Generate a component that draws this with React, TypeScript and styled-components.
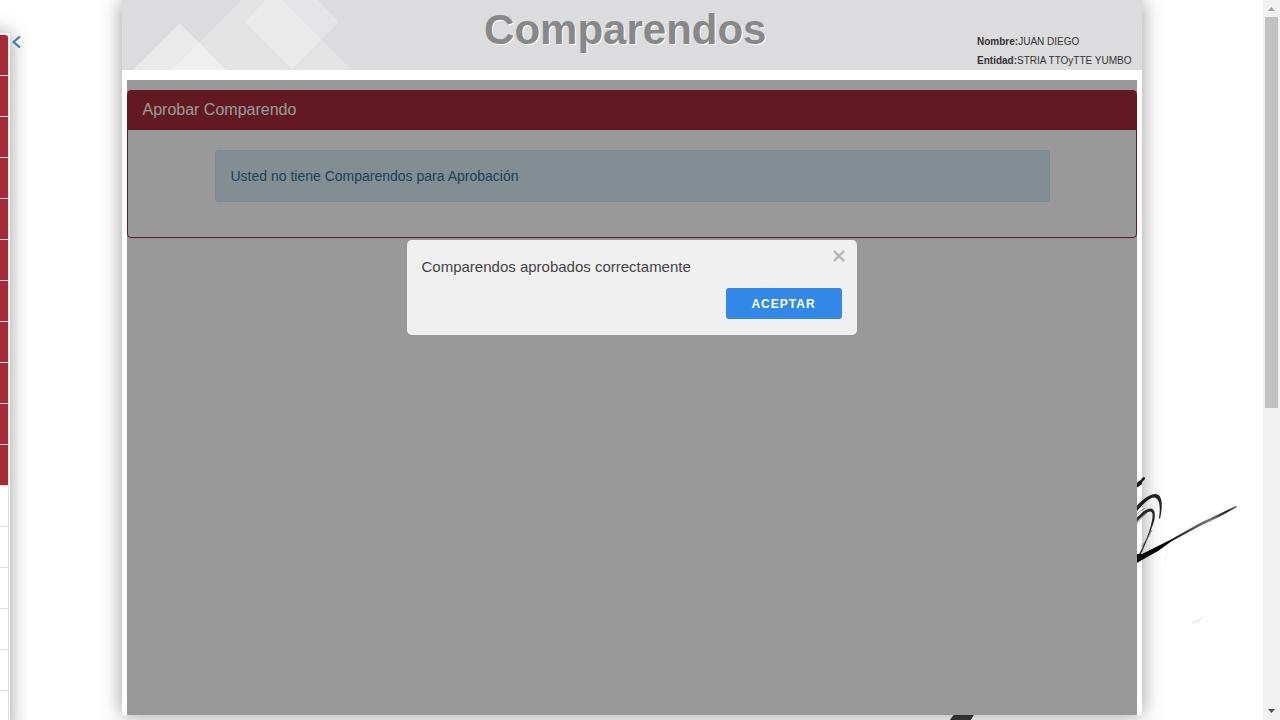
import React, { useState } from "react";
import styled, { createGlobalStyle } from "styled-components";

const GlobalStyle = createGlobalStyle`
  *, *::before, *::after { box-sizing: border-box; }
  body {
    margin: 0;
    background: #fff;
    color: #333;
    font-family: "Liberation Sans", Arial, sans-serif;
    font-size: 14px;
    line-height: 20px;
  }
`;

const Page = styled.div`
  display: grid;
  grid-template-columns: minmax(0, 1fr) 17px;
  height: 100vh;
  overflow: hidden;
`;

const Content = styled.div`
  position: relative;
  display: flex;
  justify-content: center;
  padding-bottom: 5px;
  overflow: hidden;
`;

const Signature = styled.svg`
  position: absolute;
  right: 0;
  bottom: 0;
  width: 330px;
  height: 260px;
`;

const SideMenu = styled.nav`
  position: absolute;
  left: -240px;
  top: 33px;
  width: 250px;
  padding: 1px;
  border-radius: 4px;
  background: #fff;
  box-shadow: 0 0 20px rgba(0, 0, 0, 0.4);
`;

const MenuList = styled.ul`
  margin: 0;
  padding: 0;
  list-style: none;
  border: 1px solid #ddd;
  border-radius: 4px;
  overflow: hidden;
`;

const MenuItem = styled.li<{ $active: boolean }>`
  height: 41px;
  border-bottom: 1px solid #ddd;
  background: ${(p) => (p.$active ? "#a42a37" : "#fff")};
`;

const MenuToggle = styled.button`
  position: absolute;
  left: 12px;
  top: 36px;
  display: flex;
  padding: 0;
  border: 0;
  background: none;
  color: #337ab7;
  cursor: pointer;
`;

const Shell = styled.div`
  position: relative;
  display: flex;
  flex-direction: column;
  width: 100%;
  max-width: 1020px;
  box-shadow: 0 0 20px rgba(0, 0, 0, 0.4);
`;

const Header = styled.header`
  display: flex;
  height: 70px;
  background: #dcdcde;
`;

const HeaderArt = styled.svg`
  flex: none;
  width: 232px;
  height: 70px;
`;

const Title = styled.h1`
  flex: 1;
  margin: 0;
  text-align: center;
  font-size: 42px;
  line-height: 60px;
  color: #888;
  text-shadow: 1px 1px 0 #fff;
`;

const UserInfo = styled.dl`
  display: flex;
  flex-direction: column;
  justify-content: flex-end;
  margin: 0;
  padding: 0 10px 0 80px;
  font-size: 10px;
  line-height: 19px;
`;

const UserRow = styled.div`
  display: flex;
  dt { font-weight: bold; }
  dd { margin: 0; white-space: nowrap; }
`;

const Frame = styled.main`
  position: relative;
  flex: 1;
  margin: 10px 5px 0;
  padding-top: 10px;
  background: #fff;
`;

const Panel = styled.section`
  border: 1px solid #a42a37;
  border-radius: 4px;
  background: #fff;
  box-shadow: 0 1px 1px rgba(0, 0, 0, 0.05);
`;

const PanelTitle = styled.h2`
  margin: 0;
  padding: 9px 15px 11px;
  background: #a42a37;
  color: #fff;
  font-size: 16px;
  font-weight: normal;
  line-height: 19px;
`;

const PanelBody = styled.div`
  padding: 20px 86px 35px 87px;
`;

const Alert = styled.div`
  padding: 15px;
  border: 1px solid #bce8f1;
  border-radius: 4px;
  background: #d9edf7;
  color: #31708f;
`;

const Overlay = styled.div`
  position: absolute;
  inset: 0;
  display: flex;
  justify-content: center;
  align-items: flex-start;
  padding-top: 160px;
  background: rgba(0, 0, 0, 0.4);
`;

const Dialog = styled.div`
  position: relative;
  display: flex;
  flex-direction: column;
  width: 450px;
  padding: 15px 15px 16px;
  border-radius: 5px;
  background: #f0f0f0;
  color: #444;
  font-size: 15px;
  line-height: 23px;
`;

const DialogText = styled.p`
  margin: 0 0 10px;
`;

const AcceptButton = styled.button`
  align-self: flex-end;
  min-width: 116px;
  height: 31px;
  padding: 0 24px;
  border: 0;
  border-radius: 3px;
  background: #3288e6;
  color: #fff;
  font-family: inherit;
  font-size: 12px;
  font-weight: bold;
  letter-spacing: 1px;
  text-transform: uppercase;
  cursor: pointer;
`;

const CloseButton = styled.button`
  position: absolute;
  top: 10px;
  right: 12px;
  display: flex;
  padding: 0;
  border: 0;
  background: none;
  color: #bbb;
  cursor: pointer;
`;

const ScrollTrack = styled.div`
  display: flex;
  flex-direction: column;
  align-items: center;
  background: #f1f1f1;
`;

const ScrollArrow = styled.svg`
  flex: none;
  width: 17px;
  height: 17px;
`;

const ScrollRail = styled.div`
  flex: 1;
  width: 13px;
`;

const ScrollThumb = styled.div`
  height: 57%;
  background: #c1c1c1;
`;

const menuItems = Array.from({ length: 17 }, (_, i) => ({ id: i, active: i < 11 }));

const user = [
  { label: "Nombre:", value: "JUAN DIEGO" },
  { label: "Entidad:", value: "STRIA TTOyTTE YUMBO" },
];

export default function App() {
  const [open, setOpen] = useState(true);
  return (
    <>
      <GlobalStyle />
      <Page>
        <Content>
          <Signature viewBox="933 460 330 260" aria-hidden="true">
            <defs>
              <linearGradient id="ink" x1="0" x2="1">
                <stop offset="0" stopColor="#111" />
                <stop offset="0.35" stopColor="#000" />
                <stop offset="0.6" stopColor="#555" />
                <stop offset="0.75" stopColor="#777" />
                <stop offset="0.9" stopColor="#222" />
                <stop offset="1" stopColor="#555" />
              </linearGradient>
            </defs>
            <path d="M1132 486L1137 483L1139 481L1141 480L1142 478L1144.500 477L1145 479L1142 482L1142 484L1138 487L1132 490z" fill="#1a1a1a" />
            <path
              d="M1130 515C1137 504 1147 494 1156 494C1162.500 495 1163 505 1160 519L1159 518C1161 505 1159 498 1154 497.500C1148 498 1141 506 1130 520z"
              fill="#242224"
            />
            <path
              d="M1130 526C1137 517 1144 508.500 1151 508.500C1156.500 509.500 1155.500 519 1152 527C1149 536 1144 547 1141 554L1139 554C1145 543 1149 533 1151 525C1153.500 515 1153 511.500 1150 511.500C1145 512 1138 520 1130 530z"
              fill="#2c2a2c"
            />
            <path
              d="M1134 517Q1139 511 1145 508M1137 523Q1142 516 1147 513M1152 530Q1147 541 1141 547"
              fill="none"
              stroke="#777"
              strokeWidth="0.8"
            />
            <path
              d="M1130 557L1137 554L1142 554L1156 547L1171 539.500L1200 523L1218 514.500L1236 506L1237 507L1220 516.500L1200 526L1172 541L1158 551L1142 560L1130 567z"
              fill="url(#ink)"
            />
            <path d="M1171 542Q1166 551 1165 562" fill="none" stroke="#fdf1ef" />
            <path d="M1190 623.500Q1199 624 1204 616Q1198 620 1190 623.500z" fill="#f3e8e7" />
            <path d="M949 721L956 712L976 712L970 721z" fill="#3c3a3b" />
          </Signature>

          <Shell>
            <Header>
              <HeaderArt viewBox="0 0 232 70" fill="#fff" aria-hidden="true">
                <path d="M57.500 23L104.500 70H10.500z" fillOpacity="0.4" />
                <path d="M120 0H160L230 70H50z" fillOpacity="0.23" />
                <path d="M144 0H196L216.500 22L170 69L123 22z" fillOpacity="0.27" />
              </HeaderArt>
              <Title>Comparendos</Title>
              <UserInfo>
                {user.map((row) => (
                  <UserRow key={row.label}>
                    <dt>{row.label}</dt>
                    <dd>{row.value}</dd>
                  </UserRow>
                ))}
              </UserInfo>
            </Header>

            <Frame>
              <Panel>
                <PanelTitle>Aprobar Comparendo</PanelTitle>
                <PanelBody>
                  <Alert>Usted no tiene Comparendos para Aprobación</Alert>
                </PanelBody>
              </Panel>
              {open && (
                <Overlay>
                  <Dialog role="dialog" aria-modal="true" aria-labelledby="dialog-text">
                    <DialogText id="dialog-text">Comparendos aprobados correctamente</DialogText>
                    <AcceptButton type="button" onClick={() => setOpen(false)}>
                      Aceptar
                    </AcceptButton>
                    <CloseButton type="button" aria-label="Cerrar" onClick={() => setOpen(false)}>
                      <svg width="12" height="12" viewBox="0 0 12 12" stroke="currentColor" strokeWidth="2.600">
                        <path d="M1 1L11 11M11 1L1 11" />
                      </svg>
                    </CloseButton>
                  </Dialog>
                </Overlay>
              )}
            </Frame>
          </Shell>

          <SideMenu aria-label="Menú">
            <MenuList>
              {menuItems.map((item) => (
                <MenuItem key={item.id} $active={item.active} />
              ))}
            </MenuList>
          </SideMenu>
          <MenuToggle type="button" aria-label="Ocultar menú">
            <svg width="10" height="12" viewBox="0 0 10 12" fill="none" stroke="currentColor" strokeWidth="2">
              <path d="M8 0.500L1.500 6L8 11.500" />
            </svg>
          </MenuToggle>
        </Content>

        <ScrollTrack aria-hidden="true">
          <ScrollArrow viewBox="0 0 17 17">
            <path d="M5 11L8.500 7L12 11z" fill="#a3a3a3" />
          </ScrollArrow>
          <ScrollRail>
            <ScrollThumb />
          </ScrollRail>
          <ScrollArrow viewBox="0 0 17 17">
            <path d="M5 6L8.500 10L12 6z" fill="#505050" />
          </ScrollArrow>
        </ScrollTrack>
      </Page>
    </>
  );
}
